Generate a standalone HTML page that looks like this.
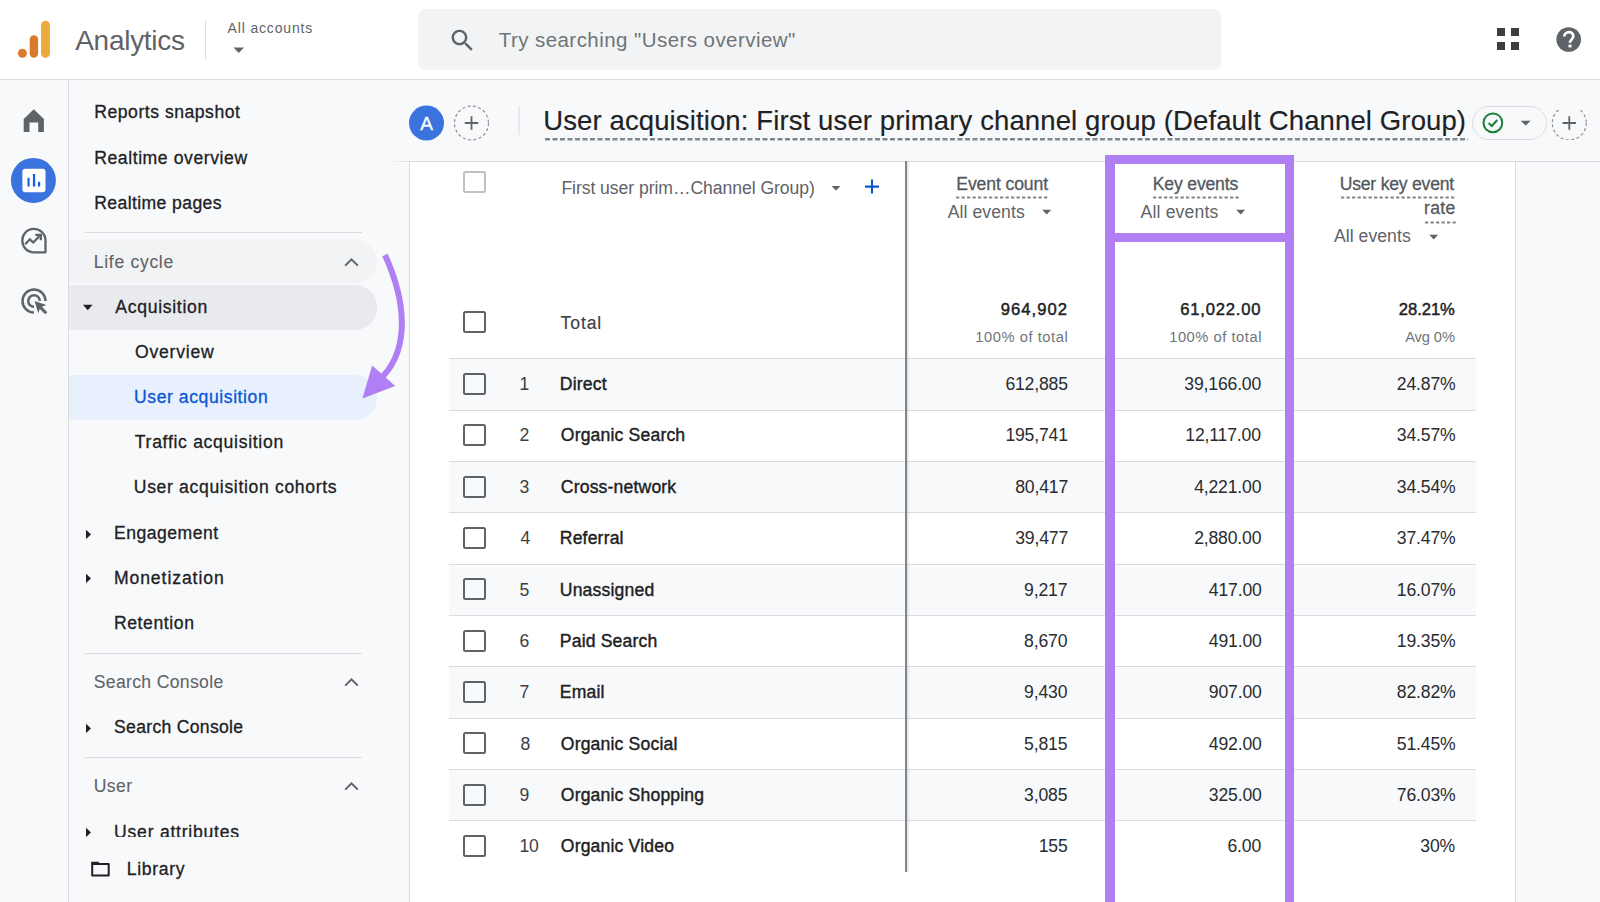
<!DOCTYPE html>
<html><head><meta charset="utf-8"><style>
html,body{margin:0;padding:0;width:1600px;height:902px;overflow:hidden;background:#f8f9fa;}
.a{position:absolute;}
.t{position:absolute;white-space:nowrap;line-height:1;font-family:"Liberation Sans", sans-serif;}
</style></head><body>
<div class="a" style="left:0px;top:0px;width:1600px;height:79px;background:#fff;"></div>
<div class="a" style="left:0px;top:79px;width:1600px;height:1px;background:#dadce0;"></div>
<div class="a" style="left:68px;top:80px;width:1px;height:822px;background:#dadce0;"></div>
<svg class="a" style="left:0;top:0" width="80" height="79">
<circle cx="22.4" cy="53.3" r="4.5" fill="#DD7A2E"/>
<rect x="29.7" y="35.3" width="8.4" height="22.4" rx="4.2" fill="#D9792C"/>
<rect x="41" y="20.8" width="8.9" height="37.1" rx="4.45" fill="#EDAA3C"/>
</svg>
<div class="t" style="left:75.20px;top:26.80px;font-size:28px;color:#5f6368;letter-spacing:-0.275px;">Analytics</div>
<div class="a" style="left:205px;top:20px;width:1px;height:39px;background:#dadce0;"></div>
<div class="t" style="left:227.60px;top:21.30px;font-size:14px;color:#5f6368;letter-spacing:0.836px;">All accounts</div>
<svg class="a" style="left:233px;top:47px" width="12" height="7"><path d="M0.5 0.5 L11 0.5 L5.75 6 Z" fill="#5f6368"/></svg>
<div class="a" style="left:418px;top:9px;width:803px;height:61px;background:#f1f3f4;border-radius:8px;"></div>
<svg class="a" style="left:447.5px;top:25.5px" width="29" height="29" viewBox="0 0 24 24"><path fill="#5f6368" d="M15.5 14h-.79l-.28-.27C15.41 12.59 16 11.11 16 9.5 16 5.91 13.09 3 9.5 3S3 5.91 3 9.5 5.91 16 9.5 16c1.61 0 3.09-.59 4.23-1.57l.27.28v.79l5 4.99L20.49 19l-4.99-5zm-6 0C7.01 14 5 11.99 5 9.5S7.01 5 9.5 5 14 7.01 14 9.5 11.99 14 9.5 14z"/></svg>
<div class="t" style="left:498.70px;top:29.55px;font-size:20.5px;color:#6f7377;letter-spacing:0.441px;">Try searching "Users overview"</div>
<div class="a" style="left:1497px;top:28px;width:8px;height:8px;background:#3c4043;"></div>
<div class="a" style="left:1511px;top:28px;width:8px;height:8px;background:#3c4043;"></div>
<div class="a" style="left:1497px;top:42px;width:8px;height:8px;background:#3c4043;"></div>
<div class="a" style="left:1511px;top:42px;width:8px;height:8px;background:#3c4043;"></div>
<svg class="a" style="left:1554px;top:25px" width="30" height="30" viewBox="0 0 30 30">
<circle cx="14.7" cy="14.5" r="12.3" fill="#5f6368"/>
<path d="M10.3 11.6 C10.3 8.9 12.3 7.2 14.9 7.2 C17.5 7.2 19.3 8.9 19.3 11.2 C19.3 14.2 16 14.5 16 17.8" stroke="#fff" stroke-width="2.7" fill="none"/>
<rect x="14.5" y="19.6" width="3" height="2.8" fill="#fff"/>
</svg>
<svg class="a" style="left:0;top:100px" width="68" height="110">
<path d="M23.7 31.9 V19 L33.8 9.3 L43.9 19 V31.9 H38.2 V22.6 H29.5 V31.9 Z" fill="#5f6368"/>
<circle cx="33.4" cy="80.4" r="22.5" fill="#3b73de"/>
<rect x="22.4" y="68.8" width="23.1" height="23.4" rx="3" fill="#fff"/>
<rect x="27.5" y="77.8" width="2.1" height="8.7" fill="#1a5fe0"/>
<rect x="32.9" y="74" width="2.3" height="12.5" fill="#1a5fe0"/>
<rect x="37.9" y="81.8" width="2.3" height="4.7" fill="#1a5fe0"/>
</svg>
<svg class="a" style="left:0;top:220px" width="68" height="100">
<path d="M45.5 20.5 C45.5 14 40.2 8.8 33.8 8.8 C27.3 8.8 22.3 14 22.3 20.5 C22.3 27 27.3 32.3 33.8 32.3 H45.5 Z" fill="none" stroke="#5f6368" stroke-width="2.3" stroke-linejoin="round"/>
<path d="M25.2 24.2 L29.8 19.3 L33.3 22.5 L39.5 16" fill="none" stroke="#5f6368" stroke-width="2.3"/>
<path d="M35.3 14.8 H40.8 V20.3" fill="none" stroke="#5f6368" stroke-width="2.3"/>
<circle cx="42.6" cy="29.3" r="1.1" fill="#fff"/>
<path d="M34 92.5 A11.5 11.5 0 1 1 45.5 81" fill="none" stroke="#5f6368" stroke-width="2.5"/>
<path d="M34 86.8 A5.8 5.8 0 1 1 39.8 81" fill="none" stroke="#5f6368" stroke-width="2.5"/>
<path d="M34.6 81 L46.4 85 L41.9 86.8 L47.3 92.2 L45.2 94.3 L39.8 88.9 L38.2 93.2 Z" fill="#5f6368"/>
</svg>
<div class="t" style="left:94.30px;top:103.50px;font-size:17.6px;color:#202124;letter-spacing:0.513px;-webkit-text-stroke:0.3px #202124;">Reports snapshot</div>
<div class="t" style="left:94.20px;top:149.50px;font-size:17.6px;color:#202124;letter-spacing:0.575px;-webkit-text-stroke:0.3px #202124;">Realtime overview</div>
<div class="t" style="left:94.20px;top:194.50px;font-size:17.6px;color:#202124;letter-spacing:0.392px;-webkit-text-stroke:0.3px #202124;">Realtime pages</div>
<div class="a" style="left:85px;top:232px;width:277px;height:1px;background:#dadce0;"></div>
<div class="a" style="left:69px;top:240px;width:308px;height:43.3px;background:#f1f3f4;border-radius:0 22px 22px 0;"></div>
<div class="t" style="left:93.80px;top:253.50px;font-size:17.6px;color:#5f6368;letter-spacing:0.678px;-webkit-text-stroke:0.1px #5f6368;">Life cycle</div>
<svg class="a" style="left:343px;top:256px" width="17" height="12"><path d="M2.2 9.6 L8.5 3.3 L14.8 9.6" stroke="#5f6368" stroke-width="2" fill="none"/></svg>
<div class="a" style="left:69px;top:285px;width:308px;height:44.5px;background:#e8eaed;border-radius:0 22px 22px 0;"></div>
<svg class="a" style="left:82px;top:304px" width="12" height="8"><path d="M1 0.8 L10.5 0.8 L5.75 6.2 Z" fill="#202124"/></svg>
<div class="t" style="left:115.20px;top:298.50px;font-size:17.6px;color:#202124;letter-spacing:0.710px;-webkit-text-stroke:0.3px #202124;">Acquisition</div>
<div class="t" style="left:135.00px;top:343.50px;font-size:17.6px;color:#202124;letter-spacing:0.771px;-webkit-text-stroke:0.3px #202124;">Overview</div>
<div class="a" style="left:69px;top:375.3px;width:308px;height:44.5px;background:#e8f0fe;border-radius:0 22px 22px 0;"></div>
<div class="t" style="left:134.00px;top:388.50px;font-size:17.6px;color:#0b57d0;letter-spacing:0.567px;-webkit-text-stroke:0.3px #0b57d0;">User acquisition</div>
<div class="t" style="left:134.80px;top:433.50px;font-size:17.6px;color:#202124;letter-spacing:0.694px;-webkit-text-stroke:0.3px #202124;">Traffic acquisition</div>
<div class="t" style="left:133.80px;top:478.50px;font-size:17.6px;color:#202124;letter-spacing:0.652px;-webkit-text-stroke:0.3px #202124;">User acquisition cohorts</div>
<svg class="a" style="left:84.6px;top:528.5px" width="7" height="11"><path d="M1 0.8 L6 5.4 L1 10 Z" fill="#202124"/></svg>
<div class="t" style="left:113.90px;top:524.50px;font-size:17.6px;color:#202124;letter-spacing:0.500px;-webkit-text-stroke:0.3px #202124;">Engagement</div>
<svg class="a" style="left:84.6px;top:573.4px" width="7" height="11"><path d="M1 0.8 L6 5.4 L1 10 Z" fill="#202124"/></svg>
<div class="t" style="left:113.90px;top:569.50px;font-size:17.6px;color:#202124;letter-spacing:0.918px;-webkit-text-stroke:0.3px #202124;">Monetization</div>
<div class="t" style="left:113.90px;top:614.50px;font-size:17.6px;color:#202124;letter-spacing:0.600px;-webkit-text-stroke:0.3px #202124;">Retention</div>
<div class="a" style="left:85px;top:652.5px;width:277px;height:1px;background:#dadce0;"></div>
<div class="t" style="left:93.70px;top:673.50px;font-size:17.6px;color:#5f6368;letter-spacing:0.338px;-webkit-text-stroke:0.1px #5f6368;">Search Console</div>
<svg class="a" style="left:343px;top:676px" width="17" height="12"><path d="M2.2 9.6 L8.5 3.3 L14.8 9.6" stroke="#5f6368" stroke-width="2" fill="none"/></svg>
<svg class="a" style="left:84.6px;top:722.8px" width="7" height="11"><path d="M1 0.8 L6 5.4 L1 10 Z" fill="#202124"/></svg>
<div class="t" style="left:114.10px;top:718.50px;font-size:17.6px;color:#202124;letter-spacing:0.292px;-webkit-text-stroke:0.3px #202124;">Search Console</div>
<div class="a" style="left:85px;top:756.5px;width:277px;height:1px;background:#dadce0;"></div>
<div class="t" style="left:93.70px;top:777.50px;font-size:17.6px;color:#5f6368;letter-spacing:0.433px;-webkit-text-stroke:0.1px #5f6368;">User</div>
<svg class="a" style="left:343px;top:780px" width="17" height="12"><path d="M2.2 9.6 L8.5 3.3 L14.8 9.6" stroke="#5f6368" stroke-width="2" fill="none"/></svg>
<svg class="a" style="left:84.8px;top:826.5px" width="7" height="11"><path d="M1 0.8 L6 5.4 L1 10 Z" fill="#202124"/></svg>
<div class="t" style="left:114.10px;top:823.50px;font-size:17.6px;color:#202124;letter-spacing:0.757px;-webkit-text-stroke:0.3px #202124;">User attributes</div>
<div class="a" style="left:69px;top:837px;width:340px;height:65px;background:#f8f9fa;"></div>
<svg class="a" style="left:89px;top:859px" width="24" height="20"><path d="M3.2 5 H19.7 V16.6 H3.2 Z" fill="none" stroke="#202124" stroke-width="2" stroke-linejoin="round"/><path d="M2.2 2.8 H9.5 L11 5.5 H2.2 Z" fill="#202124"/></svg>
<div class="t" style="left:126.70px;top:860.50px;font-size:17.6px;color:#202124;letter-spacing:0.683px;-webkit-text-stroke:0.3px #202124;">Library</div>
<svg class="a" style="left:400px;top:95px" width="130" height="60">
<circle cx="26.5" cy="28" r="17.5" fill="#3b73de"/>
<circle cx="71.5" cy="28" r="17" fill="none" stroke="#8d9196" stroke-width="1.2" stroke-dasharray="3 2.4"/>
<path d="M64.8 28 H78.2 M71.5 21.3 V34.7" stroke="#5f6368" stroke-width="1.8"/>
<rect x="118.5" y="11" width="1" height="29" fill="#dadce0"/>
</svg>
<div class="t" style="left:420.30px;top:114.30px;font-size:19px;color:#fff;-webkit-text-stroke:0.3px #fff;">A</div>
<div class="t" style="left:543.20px;top:107.05px;font-size:27.5px;color:#202124;letter-spacing:0.121px;-webkit-text-stroke:0.15px #202124;">User acquisition: First user primary channel group (Default Channel Group)</div>
<svg class="a" style="left:544.5px;top:137px" width="923" height="4"><line x1="0" y1="2.2" x2="923" y2="2.2" stroke="#80868b" stroke-width="2.4" stroke-dasharray="5 2.5"/></svg>
<div class="a" style="left:1471.5px;top:105.5px;width:75px;height:34.5px;border:1px solid #dadce0;border-radius:18px;box-sizing:border-box;"></div>
<svg class="a" style="left:1480px;top:110px" width="110" height="30">
<circle cx="12.9" cy="12.8" r="9.4" fill="none" stroke="#188038" stroke-width="2"/>
<path d="M8.6 13 L11.7 16 L17.3 10" fill="none" stroke="#188038" stroke-width="2"/>
<path d="M40.7 10.7 L50.7 10.7 L45.7 15.5 Z" fill="#5f6368"/>
<circle cx="89.3" cy="13" r="17" fill="none" stroke="#8d9196" stroke-width="1.2" stroke-dasharray="3 2.4"/>
</svg>
<svg class="a" style="left:1550px;top:104px" width="40" height="40"><path d="M12.6 19 H26 M19.3 12.3 V25.7" stroke="#5f6368" stroke-width="1.8"/></svg>
<div class="a" style="left:390px;top:161px;width:19px;height:1px;background:linear-gradient(to right,rgba(218,220,224,0),#dadce0);"></div>
<div class="a" style="left:409px;top:161px;width:1191px;height:1px;background:#dadce0;"></div>
<div class="a" style="left:409px;top:162px;width:1106px;height:740px;background:#fff;"></div>
<div class="a" style="left:409px;top:161px;width:1px;height:741px;background:#dadce0;"></div>
<div class="a" style="left:1515px;top:161px;width:1px;height:741px;background:#dadce0;"></div>
<div class="a" style="left:463.2px;top:171px;width:22.4px;height:21.6px;border:2.2px solid #bdc1c6;border-radius:2.5px;box-sizing:border-box;"></div>
<div class="t" style="left:561.40px;top:179.50px;font-size:17.6px;color:#5f6368;letter-spacing:-0.059px;">First user prim…Channel Group)</div>
<svg class="a" style="left:830px;top:185px" width="12" height="7"><path d="M1.5 1 L10.5 1 L6 5.5 Z" fill="#5f6368"/></svg>
<svg class="a" style="left:862px;top:177px" width="20" height="20"><path d="M3 9.6 H17 M10 2.6 V16.6" stroke="#0b57d0" stroke-width="2.1"/></svg>
<div class="t" style="left:956.30px;top:175.50px;font-size:17.6px;color:#55595e;letter-spacing:-0.120px;-webkit-text-stroke:0.3px #55595e;">Event count</div>
<svg class="a" style="left:956px;top:195.5px" width="93" height="3"><line x1="0" y1="1.5" x2="93" y2="1.5" stroke="#80868b" stroke-width="2" stroke-dasharray="3.3 2.2"/></svg>
<div class="t" style="left:947.80px;top:203.50px;font-size:17.6px;color:#5f6368;letter-spacing:0.067px;">All events</div>
<svg class="a" style="left:1041px;top:209px" width="12" height="7"><path d="M1.2 0.8 L10.2 0.8 L5.7 5.6 Z" fill="#5f6368"/></svg>
<div class="t" style="left:1152.80px;top:175.50px;font-size:17.6px;color:#55595e;letter-spacing:-0.178px;-webkit-text-stroke:0.3px #55595e;">Key events</div>
<svg class="a" style="left:1153px;top:195.5px" width="86" height="3"><line x1="0" y1="1.5" x2="86" y2="1.5" stroke="#80868b" stroke-width="2" stroke-dasharray="3.3 2.2"/></svg>
<div class="t" style="left:1140.60px;top:203.50px;font-size:17.6px;color:#5f6368;letter-spacing:0.156px;">All events</div>
<svg class="a" style="left:1234.5px;top:209px" width="12" height="7"><path d="M1.2 0.8 L10.2 0.8 L5.7 5.6 Z" fill="#5f6368"/></svg>
<div class="t" style="left:1339.70px;top:175.50px;font-size:17.6px;color:#55595e;letter-spacing:-0.215px;-webkit-text-stroke:0.3px #55595e;">User key event</div>
<svg class="a" style="left:1340.5px;top:195.8px" width="115" height="3"><line x1="0" y1="1.5" x2="115" y2="1.5" stroke="#80868b" stroke-width="2" stroke-dasharray="3.3 2.2"/></svg>
<div class="t" style="left:1424.00px;top:199.50px;font-size:17.6px;color:#55595e;letter-spacing:0.333px;-webkit-text-stroke:0.3px #55595e;">rate</div>
<svg class="a" style="left:1424.5px;top:221px" width="31" height="3"><line x1="0" y1="1.5" x2="31" y2="1.5" stroke="#80868b" stroke-width="2" stroke-dasharray="3.3 2.2"/></svg>
<div class="t" style="left:1334.00px;top:227.50px;font-size:17.6px;color:#5f6368;letter-spacing:0.044px;">All events</div>
<svg class="a" style="left:1428px;top:234px" width="12" height="7"><path d="M1.2 0.8 L10.2 0.8 L5.7 5.6 Z" fill="#5f6368"/></svg>
<div class="a" style="left:463.1px;top:311.2px;width:22.5px;height:22.2px;border:2.3px solid #5f6368;border-radius:2.5px;box-sizing:border-box;"></div>
<div class="t" style="left:560.60px;top:314.50px;font-size:17.6px;color:#3c4043;letter-spacing:0.875px;-webkit-text-stroke:0.15px #3c4043;">Total</div>
<div class="t" style="left:1000.80px;top:301.50px;font-size:16.6px;color:#202124;letter-spacing:1.033px;-webkit-text-stroke:0.45px #202124;">964,902</div>
<div class="t" style="left:1180.30px;top:301.50px;font-size:16.6px;color:#202124;letter-spacing:0.800px;-webkit-text-stroke:0.45px #202124;">61,022.00</div>
<div class="t" style="left:1398.80px;top:301.50px;font-size:16.6px;color:#202124;letter-spacing:-0.040px;-webkit-text-stroke:0.45px #202124;">28.21%</div>
<div class="t" style="left:975.20px;top:329.95px;font-size:14.7px;color:#70757a;letter-spacing:0.567px;">100% of total</div>
<div class="t" style="left:1169.20px;top:329.95px;font-size:14.7px;color:#70757a;letter-spacing:0.542px;">100% of total</div>
<div class="t" style="left:1405.20px;top:329.95px;font-size:14.7px;color:#70757a;letter-spacing:-0.120px;">Avg 0%</div>
<div class="a" style="left:449px;top:358.2px;width:1027px;height:51.35px;background:#f8f9fa;"></div>
<div class="a" style="left:449px;top:358.2px;width:1027px;height:1px;background:#dadce0;"></div>
<div class="a" style="left:463.1px;top:372.8px;width:22.5px;height:22px;border:2.3px solid #5f6368;border-radius:2.5px;box-sizing:border-box;"></div>
<div class="t" style="left:519.40px;top:375.50px;font-size:17.6px;color:#3c4043;letter-spacing:-0.163px;">1</div>
<div class="t" style="left:559.80px;top:375.50px;font-size:17.6px;color:#202124;letter-spacing:0.163px;-webkit-text-stroke:0.4px #202124;">Direct</div>
<div class="t" style="left:1005.38px;top:375.50px;font-size:17.6px;color:#2a2c2f;letter-spacing:-0.163px;">612,885</div>
<div class="t" style="left:1184.30px;top:375.50px;font-size:17.6px;color:#2a2c2f;letter-spacing:-0.163px;">39,166.00</div>
<div class="t" style="left:1396.81px;top:375.50px;font-size:17.6px;color:#2a2c2f;letter-spacing:-0.163px;">24.87%</div>
<div class="a" style="left:449px;top:409.55px;width:1027px;height:1px;background:#dadce0;"></div>
<div class="a" style="left:463.1px;top:424.15000000000003px;width:22.5px;height:22px;border:2.3px solid #5f6368;border-radius:2.5px;box-sizing:border-box;"></div>
<div class="t" style="left:519.40px;top:426.50px;font-size:17.6px;color:#3c4043;letter-spacing:-0.163px;">2</div>
<div class="t" style="left:560.80px;top:426.50px;font-size:17.6px;color:#202124;letter-spacing:0.163px;-webkit-text-stroke:0.4px #202124;">Organic Search</div>
<div class="t" style="left:1005.38px;top:426.50px;font-size:17.6px;color:#2a2c2f;letter-spacing:-0.163px;">195,741</div>
<div class="t" style="left:1185.30px;top:426.50px;font-size:17.6px;color:#2a2c2f;letter-spacing:-0.163px;">12,117.00</div>
<div class="t" style="left:1396.81px;top:426.50px;font-size:17.6px;color:#2a2c2f;letter-spacing:-0.163px;">34.57%</div>
<div class="a" style="left:449px;top:460.9px;width:1027px;height:51.35px;background:#f8f9fa;"></div>
<div class="a" style="left:449px;top:460.9px;width:1027px;height:1px;background:#dadce0;"></div>
<div class="a" style="left:463.1px;top:475.5px;width:22.5px;height:22px;border:2.3px solid #5f6368;border-radius:2.5px;box-sizing:border-box;"></div>
<div class="t" style="left:519.40px;top:478.50px;font-size:17.6px;color:#3c4043;letter-spacing:-0.163px;">3</div>
<div class="t" style="left:560.80px;top:478.50px;font-size:17.6px;color:#202124;letter-spacing:0.163px;-webkit-text-stroke:0.4px #202124;">Cross-network</div>
<div class="t" style="left:1015.21px;top:478.50px;font-size:17.6px;color:#2a2c2f;letter-spacing:-0.163px;">80,417</div>
<div class="t" style="left:1194.14px;top:478.50px;font-size:17.6px;color:#2a2c2f;letter-spacing:-0.163px;">4,221.00</div>
<div class="t" style="left:1396.81px;top:478.50px;font-size:17.6px;color:#2a2c2f;letter-spacing:-0.163px;">34.54%</div>
<div class="a" style="left:449px;top:512.25px;width:1027px;height:1px;background:#dadce0;"></div>
<div class="a" style="left:463.1px;top:526.85px;width:22.5px;height:22px;border:2.3px solid #5f6368;border-radius:2.5px;box-sizing:border-box;"></div>
<div class="t" style="left:520.40px;top:529.50px;font-size:17.6px;color:#3c4043;letter-spacing:-0.163px;">4</div>
<div class="t" style="left:559.80px;top:529.50px;font-size:17.6px;color:#202124;letter-spacing:0.163px;-webkit-text-stroke:0.4px #202124;">Referral</div>
<div class="t" style="left:1015.21px;top:529.50px;font-size:17.6px;color:#2a2c2f;letter-spacing:-0.163px;">39,477</div>
<div class="t" style="left:1194.14px;top:529.50px;font-size:17.6px;color:#2a2c2f;letter-spacing:-0.163px;">2,880.00</div>
<div class="t" style="left:1396.81px;top:529.50px;font-size:17.6px;color:#2a2c2f;letter-spacing:-0.163px;">37.47%</div>
<div class="a" style="left:449px;top:563.6px;width:1027px;height:51.35px;background:#f8f9fa;"></div>
<div class="a" style="left:449px;top:563.6px;width:1027px;height:1px;background:#dadce0;"></div>
<div class="a" style="left:463.1px;top:578.2px;width:22.5px;height:22px;border:2.3px solid #5f6368;border-radius:2.5px;box-sizing:border-box;"></div>
<div class="t" style="left:519.40px;top:581.50px;font-size:17.6px;color:#3c4043;letter-spacing:-0.163px;">5</div>
<div class="t" style="left:559.80px;top:581.50px;font-size:17.6px;color:#202124;letter-spacing:0.163px;-webkit-text-stroke:0.4px #202124;">Unassigned</div>
<div class="t" style="left:1024.05px;top:581.50px;font-size:17.6px;color:#2a2c2f;letter-spacing:-0.163px;">9,217</div>
<div class="t" style="left:1208.81px;top:581.50px;font-size:17.6px;color:#2a2c2f;letter-spacing:-0.163px;">417.00</div>
<div class="t" style="left:1396.81px;top:581.50px;font-size:17.6px;color:#2a2c2f;letter-spacing:-0.163px;">16.07%</div>
<div class="a" style="left:449px;top:614.95px;width:1027px;height:1px;background:#dadce0;"></div>
<div class="a" style="left:463.1px;top:629.5500000000001px;width:22.5px;height:22px;border:2.3px solid #5f6368;border-radius:2.5px;box-sizing:border-box;"></div>
<div class="t" style="left:519.40px;top:632.50px;font-size:17.6px;color:#3c4043;letter-spacing:-0.163px;">6</div>
<div class="t" style="left:559.80px;top:632.50px;font-size:17.6px;color:#202124;letter-spacing:0.163px;-webkit-text-stroke:0.4px #202124;">Paid Search</div>
<div class="t" style="left:1024.05px;top:632.50px;font-size:17.6px;color:#2a2c2f;letter-spacing:-0.163px;">8,670</div>
<div class="t" style="left:1208.81px;top:632.50px;font-size:17.6px;color:#2a2c2f;letter-spacing:-0.163px;">491.00</div>
<div class="t" style="left:1396.81px;top:632.50px;font-size:17.6px;color:#2a2c2f;letter-spacing:-0.163px;">19.35%</div>
<div class="a" style="left:449px;top:666.3px;width:1027px;height:51.35px;background:#f8f9fa;"></div>
<div class="a" style="left:449px;top:666.3px;width:1027px;height:1px;background:#dadce0;"></div>
<div class="a" style="left:463.1px;top:680.9px;width:22.5px;height:22px;border:2.3px solid #5f6368;border-radius:2.5px;box-sizing:border-box;"></div>
<div class="t" style="left:519.40px;top:683.50px;font-size:17.6px;color:#3c4043;letter-spacing:-0.163px;">7</div>
<div class="t" style="left:559.80px;top:683.50px;font-size:17.6px;color:#202124;letter-spacing:0.163px;-webkit-text-stroke:0.4px #202124;">Email</div>
<div class="t" style="left:1024.05px;top:683.50px;font-size:17.6px;color:#2a2c2f;letter-spacing:-0.163px;">9,430</div>
<div class="t" style="left:1208.81px;top:683.50px;font-size:17.6px;color:#2a2c2f;letter-spacing:-0.163px;">907.00</div>
<div class="t" style="left:1396.81px;top:683.50px;font-size:17.6px;color:#2a2c2f;letter-spacing:-0.163px;">82.82%</div>
<div class="a" style="left:449px;top:717.65px;width:1027px;height:1px;background:#dadce0;"></div>
<div class="a" style="left:463.1px;top:732.25px;width:22.5px;height:22px;border:2.3px solid #5f6368;border-radius:2.5px;box-sizing:border-box;"></div>
<div class="t" style="left:520.40px;top:735.50px;font-size:17.6px;color:#3c4043;letter-spacing:-0.163px;">8</div>
<div class="t" style="left:560.80px;top:735.50px;font-size:17.6px;color:#202124;letter-spacing:0.163px;-webkit-text-stroke:0.4px #202124;">Organic Social</div>
<div class="t" style="left:1024.05px;top:735.50px;font-size:17.6px;color:#2a2c2f;letter-spacing:-0.163px;">5,815</div>
<div class="t" style="left:1208.81px;top:735.50px;font-size:17.6px;color:#2a2c2f;letter-spacing:-0.163px;">492.00</div>
<div class="t" style="left:1396.81px;top:735.50px;font-size:17.6px;color:#2a2c2f;letter-spacing:-0.163px;">51.45%</div>
<div class="a" style="left:449px;top:769.0px;width:1027px;height:51.35px;background:#f8f9fa;"></div>
<div class="a" style="left:449px;top:769.0px;width:1027px;height:1px;background:#dadce0;"></div>
<div class="a" style="left:463.1px;top:783.6px;width:22.5px;height:22px;border:2.3px solid #5f6368;border-radius:2.5px;box-sizing:border-box;"></div>
<div class="t" style="left:519.40px;top:786.50px;font-size:17.6px;color:#3c4043;letter-spacing:-0.163px;">9</div>
<div class="t" style="left:560.80px;top:786.50px;font-size:17.6px;color:#202124;letter-spacing:0.163px;-webkit-text-stroke:0.4px #202124;">Organic Shopping</div>
<div class="t" style="left:1024.05px;top:786.50px;font-size:17.6px;color:#2a2c2f;letter-spacing:-0.163px;">3,085</div>
<div class="t" style="left:1208.81px;top:786.50px;font-size:17.6px;color:#2a2c2f;letter-spacing:-0.163px;">325.00</div>
<div class="t" style="left:1396.81px;top:786.50px;font-size:17.6px;color:#2a2c2f;letter-spacing:-0.163px;">76.03%</div>
<div class="a" style="left:449px;top:820.35px;width:1027px;height:1px;background:#dadce0;"></div>
<div class="a" style="left:463.1px;top:834.95px;width:22.5px;height:22px;border:2.3px solid #5f6368;border-radius:2.5px;box-sizing:border-box;"></div>
<div class="t" style="left:519.40px;top:837.50px;font-size:17.6px;color:#3c4043;letter-spacing:-0.163px;">10</div>
<div class="t" style="left:560.80px;top:837.50px;font-size:17.6px;color:#202124;letter-spacing:0.163px;-webkit-text-stroke:0.4px #202124;">Organic Video</div>
<div class="t" style="left:1038.73px;top:837.50px;font-size:17.6px;color:#2a2c2f;letter-spacing:-0.163px;">155</div>
<div class="t" style="left:1227.49px;top:837.50px;font-size:17.6px;color:#2a2c2f;letter-spacing:-0.163px;">6.00</div>
<div class="t" style="left:1420.33px;top:837.50px;font-size:17.6px;color:#2a2c2f;letter-spacing:-0.163px;">30%</div>
<div class="a" style="left:905px;top:161px;width:2px;height:710.7px;background:#80868b;box-shadow:1.5px 0 1.5px rgba(0,0,0,0.12);"></div>
<div class="a" style="left:1105px;top:154.8px;width:189.1px;height:9.4px;background:#b07ff3;"></div>
<div class="a" style="left:1105px;top:232.8px;width:189.1px;height:9.4px;background:#b07ff3;"></div>
<div class="a" style="left:1105px;top:154.8px;width:9.6px;height:747.2px;background:#b07ff3;"></div>
<div class="a" style="left:1284.8px;top:154.8px;width:9.3px;height:747.2px;background:#b07ff3;"></div>
<svg class="a" style="left:350px;top:240px" width="70" height="180">
<path d="M35 15 C 59 68, 58 115, 28 141" fill="none" stroke="#b07ff3" stroke-width="6"/>
<path d="M12.4 158.4 L22.2 125.6 L45.2 146 Z" fill="#b07ff3"/>
</svg>
</body></html>
